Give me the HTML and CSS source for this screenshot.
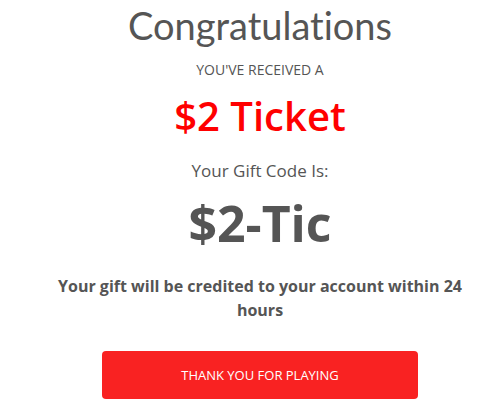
FILE: index.html
```html
<!DOCTYPE html>
<html>
<head>
<meta charset="utf-8">
<link rel="stylesheet" href="styles.css">
</head>
<body>
<div class="card">
  <h1 class="title">Congratulations</h1>
  <p class="received">YOU'VE RECEIVED A</p>
  <p class="prize">$2 Ticket</p>
  <p class="code-label">Your Gift Code Is:</p>
  <p class="code">$2-Tic</p>
  <p class="note">Your gift will be credited to your account within 24 hours</p>
  <button class="btn">THANK YOU FOR PLAYING</button>
</div>
</body>
</html>
```
FILE: styles.css
```css
html, body { margin: 0; padding: 0; background: #fff; }
body { font-family: "Open Sans", "DejaVu Sans", sans-serif; color: #555; font-variant-ligatures: none; }
.card {
  width: 430px;
  margin-left: 45px;
  padding-top: 1px;
  display: flex;
  flex-direction: column;
  align-items: center;
  text-align: center;
}
.card p, .card h1 { margin: 0; }
.title { font-family: Lato, "Open Sans", sans-serif; font-size: 38px; font-weight: 400; line-height: 48px; font-variant-ligatures: none; }
.card .received { font-size: 14px; line-height: 16px; margin-top: 13px; }
.card .prize { font-size: 40px; font-weight: 600; color: #ff0000; line-height: 44px; margin-top: 16px; }
.card .code-label { font-size: 17px; line-height: 20px; margin-top: 23px; }
.card .code { font-size: 50px; font-weight: 700; line-height: 56px; margin-top: 14px; }
.card .note { font-size: 16px; font-weight: 700; line-height: 24px; margin-top: 23px; width: 424px; }
.btn {
  margin-top: 29px;
  width: 316px;
  height: 48px;
  border: 0;
  border-radius: 4px;
  background: #f92222;
  color: #fff;
  font-family: inherit;
  font-size: 13px;
}
```
